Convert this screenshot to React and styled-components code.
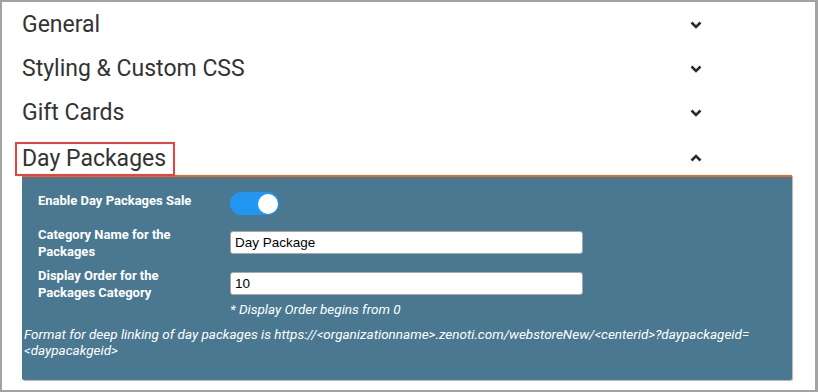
import React, { useState } from 'react'
import styled, { createGlobalStyle } from 'styled-components'

const GlobalStyle = createGlobalStyle`
  html, body {
    margin: 0;
    padding: 0;
    background: #fff;
  }
  body {
    font-family: Roboto, "Liberation Sans", Arial, sans-serif;
  }
`

const Frame = styled.div`
  box-sizing: border-box;
  width: 818px;
  height: 392px;
  border: 2px solid #a3a3a3;
  border-right-width: 3px;
  padding: 0 23px 0 20px;
  overflow: hidden;
`

const Header = styled.div`
  display: flex;
  justify-content: space-between;
  align-items: flex-start;
  box-sizing: border-box;
  height: ${p => (p.$open ? 41 : 44)}px;
  padding: 8px 90px 0 0;
  cursor: pointer;
`

const Title = styled.span`
  display: inline-block;
  font-size: 23px;
  line-height: 30px;
  color: #333;
  ${p =>
    p.$highlight &&
    `
    border: 2px solid #e9413f;
    padding: 0 7px 0 5px;
    margin-left: -7px;
    position: relative;
    z-index: 1;
  `}
`

const Chevron = styled.svg`
  margin-top: ${p => (p.$up ? 12 : 11)}px;
  width: 12px;
  height: 8px;
  color: #2b2b2b;
`

const Panel = styled.div`
  background: #4a7891;
  border-top: 2px solid #f26522;
  box-shadow: 1px 1px 1px #b5b5b5;
  border-radius: 0 0 2px 2px;
  padding: 15px 0 22px 16px;
  color: #fff;
`

const FormRow = styled.div`
  display: grid;
  grid-template-columns: 192px 353px;
  margin-bottom: 7px;
`

const Label = styled.div`
  font-size: 13px;
  line-height: 17px;
  font-weight: 700;
  color: #fff;
`

const Field = styled.div`
  padding-top: ${p => p.$offset || 0}px;
`

const Input = styled.input`
  box-sizing: border-box;
  width: 353px;
  height: 23px;
  border: 1px solid #a9a9a9;
  border-radius: 3px;
  padding: 0 4px;
  font-family: "Liberation Sans", Arial, sans-serif;
  font-size: 13.5px;
  color: #000;
  background: #fff;
  outline: none;
`

const Track = styled.button`
  position: relative;
  width: 49px;
  height: 23px;
  border: none;
  border-radius: 12px;
  padding: 0;
  background: ${p => (p.$on ? '#2196f3' : '#ccc')};
  cursor: pointer;
`

const Knob = styled.span`
  position: absolute;
  top: 1.5px;
  left: ${p => (p.$on ? 28 : 2)}px;
  width: 20px;
  height: 20px;
  border-radius: 50%;
  background: #fff;
`

const Hint = styled.div`
  margin: -7px 0 0 192px;
  font-size: 13.5px;
  line-height: 17px;
  font-style: italic;
`

const Note = styled.p`
  margin: 8px 0 0 -14px;
  padding-right: 16px;
  font-size: 13.5px;
  line-height: 16px;
  font-style: italic;
  white-space: nowrap;
`

const ChevronIcon = ({ up }) => (
  <Chevron $up={up} viewBox="0 0 12 8">
    <polyline
      points={up ? '1.5,6.5 6,2 10.5,6.5' : '1.5,1.5 6,6 10.5,1.5'}
      fill="none"
      stroke="currentColor"
      strokeWidth="2.6"
    />
  </Chevron>
)

const sections = ['General', 'Styling & Custom CSS', 'Gift Cards']

export default function App() {
  const [enabled, setEnabled] = useState(true)
  const [name, setName] = useState('Day Package')
  const [order, setOrder] = useState('10')

  return (
    <Frame>
      <GlobalStyle />
      {sections.map(s => (
        <Header key={s}>
          <Title>{s}</Title>
          <ChevronIcon />
        </Header>
      ))}
      <Header $open>
        <Title $highlight>Day Packages</Title>
        <ChevronIcon up />
      </Header>
      <Panel>
        <FormRow>
          <Label>Enable Day Packages Sale</Label>
          <Field>
            <Track $on={enabled} onClick={() => setEnabled(!enabled)}>
              <Knob $on={enabled} />
            </Track>
          </Field>
        </FormRow>
        <FormRow>
          <Label>
            Category Name for the
            <br />
            Packages
          </Label>
          <Field $offset={5}>
            <Input value={name} onChange={e => setName(e.target.value)} />
          </Field>
        </FormRow>
        <FormRow>
          <Label>
            Display Order for the
            <br />
            Packages Category
          </Label>
          <Field $offset={5}>
            <Input value={order} onChange={e => setOrder(e.target.value)} />
          </Field>
        </FormRow>
        <Hint>* Display Order begins from 0</Hint>
        <Note>
          Format for deep linking of day packages is
          https://&lt;organizationname&gt;.zenoti.com/webstoreNew/&lt;centerid&gt;?daypackageid=
          <br />
          &lt;daypacakgeid&gt;
        </Note>
      </Panel>
    </Frame>
  )
}
